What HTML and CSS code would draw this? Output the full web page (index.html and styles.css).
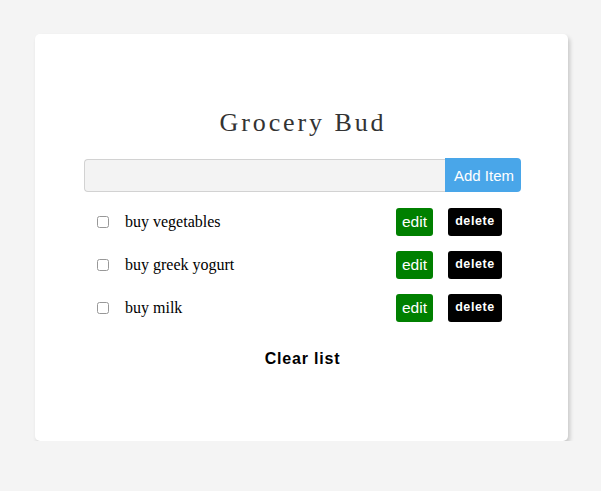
FILE: index.html
```html
<!DOCTYPE html>
<html>
<head>
<meta charset="utf-8">
<link rel="stylesheet" href="styles.css">
</head>
<body>
<section class="card">
  <h3 class="title">Grocery Bud</h3>
  <form class="form">
    <input class="form-input" type="text">
    <button type="button" class="add-btn">Add Item</button>
  </form>
  <ul class="list">
    <li class="item">
      <input type="checkbox" class="check">
      <span class="name">buy vegetables</span>
      <button type="button" class="edit-btn">edit</button>
      <button type="button" class="delete-btn">delete</button>
    </li>
    <li class="item">
      <input type="checkbox" class="check">
      <span class="name">buy greek yogurt</span>
      <button type="button" class="edit-btn">edit</button>
      <button type="button" class="delete-btn">delete</button>
    </li>
    <li class="item">
      <input type="checkbox" class="check">
      <span class="name">buy milk</span>
      <button type="button" class="edit-btn">edit</button>
      <button type="button" class="delete-btn">delete</button>
    </li>
  </ul>
  <div class="clear-wrap"><button type="button" class="clear-btn">Clear list</button></div>
</section>
</body>
</html>
```
FILE: styles.css
```css
html, body {
  margin: 0;
  padding: 0;
}
body {
  background: #f4f4f4;
  font-family: "Liberation Serif", "Times New Roman", serif;
  padding-top: 34px;
}
.card {
  box-sizing: border-box;
  width: 533px;
  height: 407px;
  margin: 0 0 0 35px;
  background: #fff;
  border-radius: 5px;
  box-shadow: 2px 3px 4px rgba(0, 0, 0, 0.18);
  padding: 71px 47px 0 49px;
}
.title {
  margin: 0 0 18px;
  text-align: center;
  font-size: 26px;
  line-height: 35px;
  font-weight: 400;
  letter-spacing: 2.9px;
  color: #333;
  padding-left: 1px;
}
.form {
  display: flex;
  height: 34px;
  margin: 0;
}
.form-input {
  flex: 1;
  box-sizing: border-box;
  margin: 1px 0 0;
  height: 33px;
  background: #f3f3f3;
  border: 1px solid #d2d2d2;
  border-right: none;
  border-radius: 4px 0 0 4px;
  padding: 0 8px;
  outline: none;
}
.add-btn {
  box-sizing: border-box;
  width: 76px;
  height: 34px;
  background: #49a6e9;
  border: none;
  border-radius: 0 4px 4px 0;
  color: #fff;
  font-family: "Liberation Sans", Arial, sans-serif;
  font-size: 15px;
  padding: 0 0 0 2px;
}
.list {
  list-style: none;
  margin: 8px 0 0;
  padding: 0 19px 0 8px;
}
.item {
  display: flex;
  align-items: center;
  height: 43px;
}
.check {
  width: 12px;
  height: 12px;
  margin: 0 16px 0 5px;
  opacity: 0.75;
}
.name {
  flex: 1;
  font-size: 16px;
  color: #000;
}
.edit-btn {
  box-sizing: border-box;
  width: 37px;
  height: 28px;
  background: #008000;
  color: #fff;
  border: none;
  border-radius: 3px;
  font-family: "Liberation Sans", Arial, sans-serif;
  font-size: 15.5px;
  padding: 0;
  margin-right: 15px;
}
.delete-btn {
  box-sizing: border-box;
  width: 54px;
  height: 28px;
  background: #000;
  color: #fff;
  border: none;
  border-radius: 3px;
  font-family: "Liberation Sans", Arial, sans-serif;
  font-size: 12.5px;
  font-weight: 700;
  letter-spacing: 0.6px;
  padding: 0 0 2px;
}
.clear-wrap {
  display: flex;
  justify-content: center;
  margin-top: 21px;
}
.clear-btn {
  background: none;
  border: none;
  padding: 0;
  font-family: "Liberation Sans", Arial, sans-serif;
  font-size: 16px;
  font-weight: 700;
  letter-spacing: 0.8px;
  line-height: 18px;
  color: #000;
}
```
